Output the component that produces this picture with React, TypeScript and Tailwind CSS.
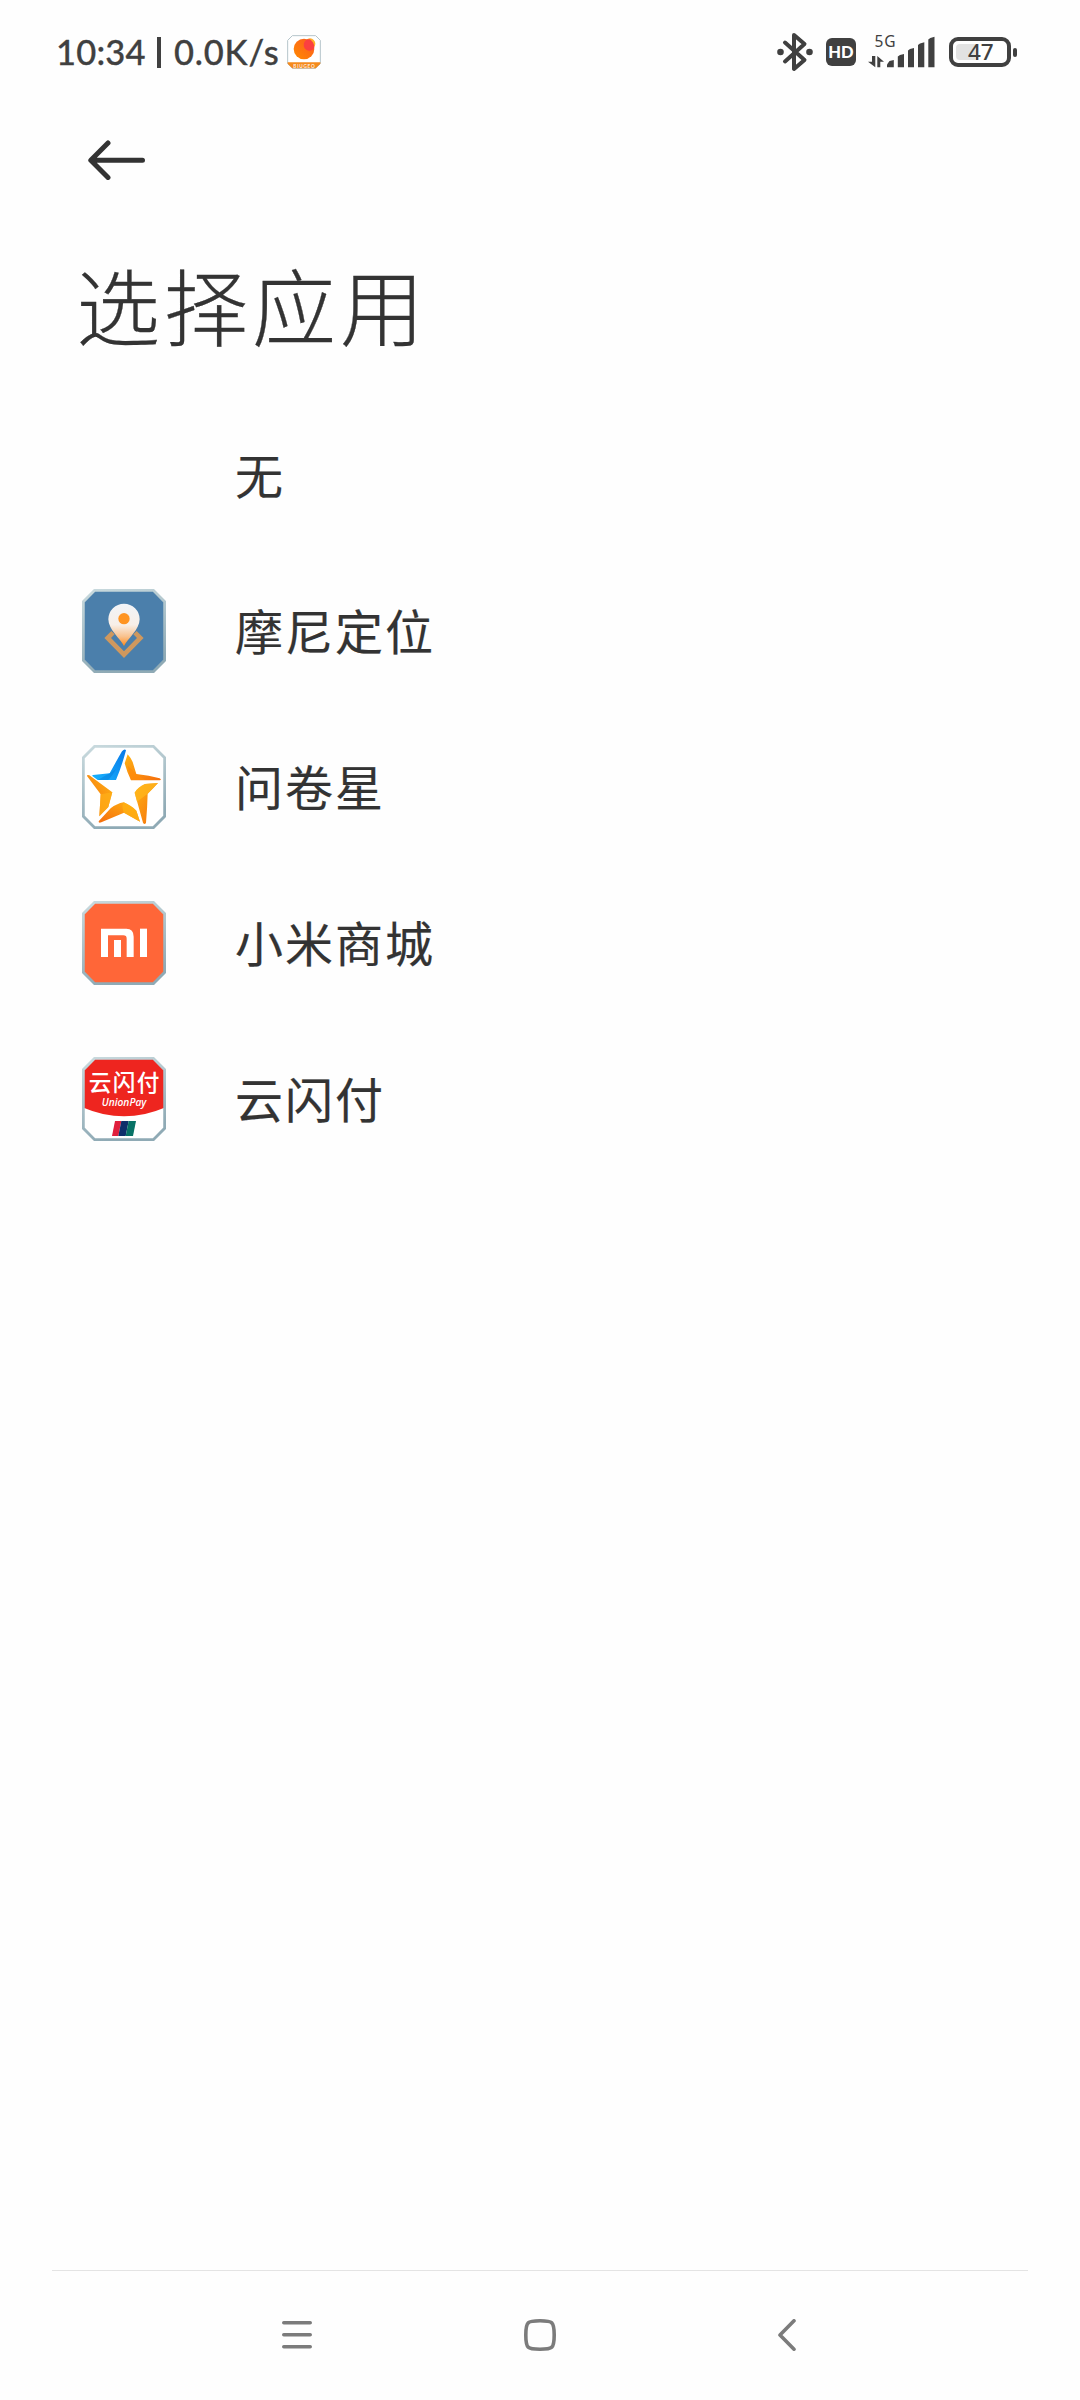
import type { ReactNode } from "react";

const cjkFont = "font-['Noto_Sans_CJK_SC',sans-serif]";

function NotificationIcon() {
  return (
    <svg className="size-[34px]" viewBox="0 0 102 102">
      <defs>
        <linearGradient id="peach" x1="0" y1="1" x2="1" y2="0">
          <stop offset="0" stopColor="#ff8a00" />
          <stop offset="1" stopColor="#fc5a22" />
        </linearGradient>
      </defs>
      <path d="M16 2H86L100 16V86L86 100H16L2 86V16Z" fill="#fff" stroke="#b5c4ca" strokeWidth="3" />
      <path d="M2 82H100V86L86 100H16L2 86Z" fill="#f58a1c" />
      <circle cx="69" cy="26" r="16" fill="#ffb028" />
      <circle cx="51" cy="42" r="31" fill="url(#peach)" />
      <path d="M52 22A16 16 0 0 1 69 13A31 31 0 0 1 82 38A17 17 0 0 1 52 22Z" fill="#fb4040" />
      <text x="51" y="98" fontSize="14" fontWeight="700" fill="#fff" fillOpacity="0.85" textAnchor="middle" textLength="64">
        BIUGEO
      </text>
    </svg>
  );
}

function BluetoothIcon() {
  return (
    <svg className="h-10 w-9" viewBox="0 0 36 40" fill="none" stroke="#404040" strokeWidth="4" strokeLinejoin="round" strokeLinecap="round">
      <path d="M8 10.5L27.5 28L17 37V3L27.5 12L8 29.5" />
      <circle cx="3.5" cy="20" r="3.3" fill="#404040" stroke="none" />
      <circle cx="32.5" cy="20" r="3.3" fill="#404040" stroke="none" />
    </svg>
  );
}

function SignalIcon() {
  return (
    <svg className="h-[50px] w-[68px]" viewBox="0 -8 68 50" fill="#404040">
      <text x="6.5" y="11.8" fontSize="15.5" fontFamily="'Noto Sans', sans-serif" fontWeight="400" textLength="21">
        5G
      </text>
      {/* data arrows */}
      <path d="M4 21H7.3V32.3L0 26.7H4Z" />
      <path d="M9.3 32.3V21L16 26.7H12.3V32.3Z" />
      <path d="M19 32.3V29.5L21.5 26L25.8 25V32.3Z" />
      <path d="M29.8 32.3V21.5L32 20L36 19V32.3Z" />
      <path d="M40 32.3V15.5L42 14L46 13V32.3Z" />
      <path d="M50 32.3V10L52 8.5L56.3 7.3V32.3Z" />
      <path d="M60.3 32.3V4.5L62.3 3L66.5 1.8V32.3Z" />
    </svg>
  );
}

function StatusBar() {
  return (
    <div className="flex h-[104px] items-center pl-[56px] pr-[63px] font-[Lato,sans-serif] text-[#404040]">
      <span className="w-[101px] text-[34.5px] font-medium leading-none tracking-[0.2px] [-webkit-text-stroke:0.3px]">10:34</span>
      <span className="h-[31px] w-[4px] bg-[#404040]" />
      <span className="ml-[13px] w-[113px] text-[34.5px] font-medium leading-none tracking-[0.8px] [-webkit-text-stroke:0.3px]">0.0K/s</span>
      <NotificationIcon />
      <div className="ml-auto flex items-center">
        <BluetoothIcon />
        <span className="ml-[13px] flex h-7 w-[30px] items-center justify-center rounded-[6px] bg-[#404040] text-[16.5px] font-black leading-none text-white">
          HD
        </span>
        <div className="ml-3">
          <SignalIcon />
        </div>
        <div className="ml-[13px] flex h-[30px] w-[62px] items-center rounded-[9px] border-4 border-[#404040] pl-[3px]">
          <span className="h-4 w-[19px] rounded-l-[4px] bg-[#e2e2e2]" />
          <span className="-ml-[7px] font-['Noto_Sans',sans-serif] text-[22.5px] font-medium leading-none">47</span>
        </div>
        <span className="ml-[2px] h-[9px] w-1 rounded-full bg-[#404040]" />
      </div>
    </div>
  );
}

// Octagonal frame shared by all app icons
function AppIcon({ fill, children }: { fill: string; children: ReactNode }) {
  return (
    <svg className="size-[84px] shrink-0" viewBox="0 0 252 252">
      <defs>
        <linearGradient id="frame" x1="0" y1="0" x2="0.3" y2="1">
          <stop offset="0" stopColor="#c9dade" />
          <stop offset="1" stopColor="#8faab5" />
        </linearGradient>
        <clipPath id="octagon">
          <path d="M38 3H214L249 38V214L214 249H38L3 214V38Z" />
        </clipPath>
      </defs>
      <g clipPath="url(#octagon)">
        <rect width="252" height="252" fill={fill} />
        {children}
      </g>
      <path d="M38 4H214L248 38V214L214 248H38L4 214V38Z" fill="none" stroke="url(#frame)" strokeWidth="8.5" />
    </svg>
  );
}

function LocationIcon() {
  return (
    <AppIcon fill="#4b7fab">
      <defs>
        <linearGradient id="pin" x1="0" y1="0" x2="0" y2="1">
          <stop offset="0" stopColor="#f1f4f8" />
          <stop offset="0.5" stopColor="#f8efe8" />
          <stop offset="0.78" stopColor="#f9c18c" />
          <stop offset="1" stopColor="#ff8a1a" />
        </linearGradient>
      </defs>
      <path d="M93 131L77 147L126 197L175 147L159 131" fill="none" stroke="#cf985e" strokeWidth="14" />
      <path d="M126 171C116 150 79 122 79 91A47 47 0 0 1 173 91C173 122 136 150 126 171Z" fill="url(#pin)" />
      <circle cx="126" cy="89" r="17" fill="#ff9422" />
    </AppIcon>
  );
}

function StarIcon() {
  return (
    <AppIcon fill="#fff">
      <defs>
        <linearGradient id="blue" x1="0" y1="1" x2="1" y2="0">
          <stop offset="0" stopColor="#18b4ff" />
          <stop offset="1" stopColor="#0878e8" />
        </linearGradient>
        <linearGradient id="amber" x1="0" y1="0" x2="1" y2="1">
          <stop offset="0" stopColor="#ffb414" />
          <stop offset="1" stopColor="#f56d0c" />
        </linearGradient>
        <linearGradient id="amberUp" x1="0" y1="1" x2="1" y2="0">
          <stop offset="0" stopColor="#f56d0c" />
          <stop offset="1" stopColor="#ffb414" />
        </linearGradient>
      </defs>
      <path d="M132 16Q128 10 120 19Q102 50 83 85L33 90Q29 91 32 94L47 105H102Q120 62 132 16Z" fill="url(#blue)" />
      <path d="M83 85L47 105H78Q91 94 102 72Z" fill="#0880dc" fillOpacity="0.55" />
      <path d="M137 28Q146 38 152 51L163 87Q202 91 233 100Q240 104 233 106H147Q135 82 128 55Z" fill="url(#amber)" />
      <path d="M137 62L163 87L190 105H147Z" fill="#ff8a08" fillOpacity="0.7" />
      <path d="M228 114Q215 129 197 146Q196 188 192 233Q188 241 183 233L158 143Q168 126 189 117Z" fill="url(#amber)" />
      <path d="M228 114L197 146L165 170L158 143Q168 126 189 117Z" fill="#ffb51c" fillOpacity="0.8" />
      <path d="M50 229L86 190Q104 176 125 172Q151 184 163 197L174 230Q151 217 126 203L58 232Q49 235 50 229Z" fill="url(#amberUp)" />
      <path d="M126 203Q117 186 125 172Q151 184 163 197L174 230Z" fill="#ffb013" fillOpacity="0.8" />
      <path d="M15 93Q15 88 22 91L91 142L79 186L52 214Q54 181 56 148Z" fill="url(#amberUp)" />
      <path d="M40 122L56 148L91 142L79 186L52 214L56 148Z" fill="#ffb018" fillOpacity="0.7" />
    </AppIcon>
  );
}

function MiIcon() {
  return (
    <AppIcon fill="#ff6638">
      <path d="M57 168V83H133Q155 83 155 107V168H134V113Q134 103 124 103H78V168Z" fill="#fff" />
      <rect x="96" y="117" width="21" height="51" fill="#fff" />
      <rect x="174" y="83" width="21" height="85" fill="#fff" />
    </AppIcon>
  );
}

function UnionPayIcon() {
  return (
    <AppIcon fill="#fff">
      <path d="M0 0H252V150Q126 206 0 150Z" fill="#ee251f" />
      <text x="126" y="101" fontSize="68" fontWeight="500" fontFamily="'Noto Sans CJK SC', sans-serif" fill="#fff" textAnchor="middle" textLength="212">
        云闪付
      </text>
      <text x="126" y="146" fontSize="31" fontWeight="600" fontStyle="italic" fontFamily="'Open Sans', sans-serif" fill="#fff" textAnchor="middle" textLength="134" lengthAdjust="spacingAndGlyphs">
        UnionPay
      </text>
      <path d="M99 192H118L109 237H90Z" fill="#e01f3d" />
      <path d="M118 192H140L131 237H109Z" fill="#0f2f6b" />
      <path d="M140 192H162L153 237H131Z" fill="#087266" />
    </AppIcon>
  );
}

const apps = [
  { name: "无", icon: null },
  { name: "摩尼定位", icon: <LocationIcon /> },
  { name: "问卷星", icon: <StarIcon /> },
  { name: "小米商城", icon: <MiIcon /> },
  { name: "云闪付", icon: <UnionPayIcon /> },
];

function NavBar() {
  return (
    <nav className="mx-[52px] flex h-[130px] items-center border-t border-[#e4e4e4] pb-[2px] pl-[229px]">
      <svg className="size-8" viewBox="0 0 32 32" fill="none" stroke="#7b7b7b" strokeWidth="3.6" strokeLinecap="round">
        <path d="M2.8 3.8H29.2M2.8 15.8H29.2M2.8 27.8H29.2" />
      </svg>
      <svg className="ml-[211px] size-8" viewBox="0 0 32 32" fill="none" stroke="#7b7b7b" strokeWidth="3.6">
        <path d="M16 1.8C28.5 1.8 30.2 2.5 30.2 16S28.5 30.2 16 30.2S1.8 29.5 1.8 16S3.5 1.8 16 1.8Z" />
      </svg>
      <svg className="ml-[222px] h-8 w-[18px]" viewBox="0 0 18 32" fill="none" stroke="#7b7b7b" strokeWidth="3.6" strokeLinecap="round" strokeLinejoin="round">
        <path d="M16 1.8L2 16L16 30.2" />
      </svg>
    </nav>
  );
}

export default function App() {
  return (
    <div className={`flex h-[2400px] w-[1080px] flex-col bg-[#fefefe] text-[#333333] ${cjkFont}`}>
      <StatusBar />
      <header className="pl-[76px]">
        <button className="mt-9 ml-3 block" aria-label="返回">
          <svg className="h-10 w-[58px]" viewBox="0 0 58 40" fill="none" stroke="#333333" strokeWidth="5" strokeLinecap="round" strokeLinejoin="round">
            <path d="M20 3L2.8 20.3L20 37.5M3 20.3H54.5" />
          </svg>
        </button>
        <h1 className="mt-16 text-[84px] font-light leading-[120px] tracking-[4px] [-webkit-text-stroke:0.3px]">选择应用</h1>
      </header>
      <ul className="mt-[33px] flex-1">
        {apps.map((app) => (
          <li key={app.name} className="flex h-[156px] items-center pl-[82px]">
            <div className="mr-[69px] size-[84px]">{app.icon}</div>
            <span className="pb-[5px] text-[48px] leading-none tracking-[2px] [-webkit-text-stroke:0.2px]">{app.name}</span>
          </li>
        ))}
      </ul>
      <NavBar />
    </div>
  );
}
